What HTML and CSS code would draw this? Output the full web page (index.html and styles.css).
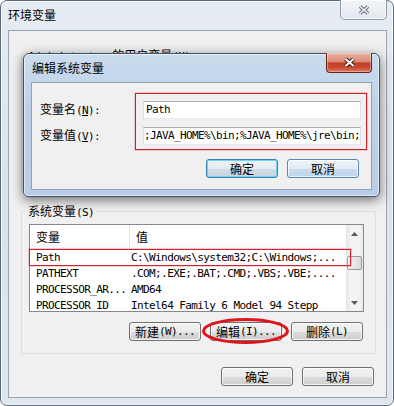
FILE: index.html
```html
<!DOCTYPE html>
<html>
<head>
<meta charset="utf-8">
<title>环境变量</title>
<link rel="stylesheet" href="styles.css">
</head>
<body>
<div class="win">
  <div class="titlebar">
    <div class="title">环境变量</div>
    <div class="xbtn">
      <svg width="12" height="10" viewBox="0 0 12 10"><path d="M2 1.5 L10 8.5 M10 1.5 L2 8.5" stroke="#66707c" stroke-width="3.6" fill="none"/><path d="M2 1.5 L10 8.5 M10 1.5 L2 8.5" stroke="#eef1f4" stroke-width="1.6" fill="none"/></svg>
    </div>
  </div>
  <div class="client">
    <div class="group user">
      <div class="glabel"><span class="m">Administrator </span>的用户变量<span class="m">(U)</span></div>
    </div>
    <div class="group sys">
      <div class="glabel">系统变量<span class="m">(S)</span></div>
      <div class="list">
        <div class="lmain">
          <div class="lhead"><div class="hc1">变量</div><div class="hc2">值</div></div>
          <div class="row"><div class="c1 m">Path</div><div class="c2 m">C:\Windows\system32;C:\Windows;...</div></div>
          <div class="row"><div class="c1 m">PATHEXT</div><div class="c2 m">.COM;.EXE;.BAT;.CMD;.VBS;.VBE;....</div></div>
          <div class="row"><div class="c1 m">PROCESSOR_AR...</div><div class="c2 m">AMD64</div></div>
          <div class="row"><div class="c1 m">PROCESSOR_ID</div><div class="c2 m">Intel64 Family 6 Model 94 Stepp</div></div>
        </div>
        <div class="sb">
          <div class="sbbtn"><svg width="7" height="4" viewBox="0 0 7 4"><path d="M0 4 L3.5 0 L7 4 Z" fill="#5a5a5a"/></svg></div>
          <div class="sbtrack"><div class="thumb"></div></div>
          <div class="sbbtn"><svg width="7" height="4" viewBox="0 0 7 4"><path d="M0 0 L3.5 4 L7 0 Z" fill="#5a5a5a"/></svg></div>
        </div>
      </div>
      <div class="brow">
        <div class="btn">新建<span class="m">(W)...</span></div>
        <div class="btn">编辑<span class="m">(I)...</span></div>
        <div class="btn">删除<span class="m">(L)</span></div>
      </div>
    </div>
    <div class="frow">
      <div class="btn">确定</div>
      <div class="btn">取消</div>
    </div>
  </div>
</div>

<div class="dlg">
  <div class="dtitle">
    <div class="title dt">编辑系统变量</div>
    <div class="dx">
      <svg width="13" height="11" viewBox="0 0 13 11"><path d="M2.5 2 L10.5 9 M10.5 2 L2.5 9" stroke="#4a1a12" stroke-width="4" fill="none"/><path d="M2.5 2 L10.5 9 M10.5 2 L2.5 9" stroke="#ffffff" stroke-width="2" fill="none"/></svg>
    </div>
  </div>
  <div class="dbody">
    <div class="fields">
      <div class="lbl">变量名<span class="m">(<u>N</u>):</span></div>
      <div class="inp m">Path</div>
      <div class="lbl">变量值<span class="m">(<u>V</u>):</span></div>
      <div class="inp long m">;JAVA_HOME%\bin;%JAVA_HOME%\jre\bin;</div>
    </div>
    <div class="dbtns">
      <div class="btn def">确定</div>
      <div class="btn hov">取消</div>
    </div>
  </div>
</div>

<div class="mark mark1"></div>
<div class="mark mark2"></div>
<svg class="ring" width="92" height="30" viewBox="0 0 92 30"><ellipse cx="45.5" cy="15" rx="42" ry="11.5" fill="none" stroke="#e0141e" stroke-width="3"/></svg>
</body>
</html>
```

FILE: styles.css
```css
* { box-sizing: border-box; }
html, body { margin: 0; padding: 0; }
body {
  width: 394px;
  height: 406px;
  overflow: hidden;
  position: relative;
  background: #ffffff;
  font-family: "Noto Sans CJK SC", sans-serif;
  font-size: 12px;
  line-height: 14px;
  color: #000;
}
.m {
  font-family: "DejaVu Sans Mono", monospace;
  font-size: 11px;
  letter-spacing: -0.6px;
}

/* outer window */
.win {
  width: 394px;
  height: 406px;
  border: 1px solid #5d6b7b;
  border-radius: 7px;
  padding: 0 6px 7px 7px;
  background: linear-gradient(180deg, #e6ecf2 0%, #dbe3eb 45%, #dfe6ed 100%);
  box-shadow: inset 0 0 0 1px rgba(255,255,255,0.65);
  display: flex;
  flex-direction: column;
}
.titlebar {
  height: 29px;
  display: flex;
  justify-content: space-between;
  align-items: flex-start;
}
.title { padding-top: 7px; white-space: nowrap; }
.xbtn {
  width: 47px;
  height: 20px;
  margin-top: -1px;
  border: 1px solid #8d9aa9;
  border-top: none;
  border-radius: 0 0 5px 5px;
  background: linear-gradient(180deg, #f3f5f8, #e3e8ee);
  box-shadow: inset 0 0 0 1px rgba(255,255,255,0.7);
  display: flex;
  align-items: center;
  justify-content: center;
}
.client {
  flex: 1;
  border: 1px solid #98a4b2;
  background: #f0f0f0;
  display: flex;
  flex-direction: column;
}

/* group boxes */
.group {
  border: 1px solid #d5dfe5;
  border-radius: 3px;
  padding: 0 11px 12px 7px;
}
.group.user { margin: 24px 10px 0 12px; height: 138px; }
.group.sys { margin: 18px 10px 0 12px; }
.glabel {
  display: block;
  width: max-content;
  height: 14px;
  margin: -8px 0 0 -3px;
  padding: 0 2px;
  background: #f0f0f0;
  white-space: nowrap;
}

/* list view */
.list {
  margin-top: 6px;
  height: 88px;
  border: 1px solid #828790;
  background: #fff;
  display: flex;
}
.lmain { flex: 1; overflow: hidden; }
.lhead {
  height: 25px;
  display: flex;
  border-bottom: 1px solid #e3e6ea;
  background: linear-gradient(180deg, #ffffff 0%, #ffffff 55%, #f6f7f9 100%);
}
.hc1 {
  width: 100px;
  padding-left: 6px;
  border-right: 1px solid #e3e6ea;
  display: flex;
  align-items: center;
}
.hc2 { padding-left: 6px; display: flex; align-items: center; }
.row {
  height: 16px;
  display: flex;
  align-items: center;
  white-space: nowrap;
}
.c1 { width: 100px; flex: none; padding-left: 6px; }
.c2 { padding-left: 1px; }
.sb {
  width: 17px;
  flex: none;
  background: linear-gradient(90deg, #e4e4e4 0%, #f3f3f3 25%, #f3f3f3 75%, #e8e8e8 100%);
  display: flex;
  flex-direction: column;
}
.sbbtn {
  height: 17px;
  display: flex;
  align-items: center;
  justify-content: center;
}
.sbtrack { flex: 1; }
.thumb {
  margin: 14px 1px 0 1px;
  height: 14px;
  border: 1px solid #9a9a9a;
  border-radius: 2px;
  background: linear-gradient(90deg, #f6f6f6, #e4e4e4 60%, #d9d9d9);
}

/* buttons */
.brow {
  display: flex;
  justify-content: flex-end;
  gap: 9px;
  margin: 10px 1px 0 0;
}
.frow {
  display: flex;
  justify-content: flex-end;
  gap: 9px;
  margin: 13px 12px 0 0;
}
.btn {
  width: 72px;
  height: 19px;
  border: 1px solid #707070;
  border-radius: 3px;
  background: linear-gradient(180deg, #f2f2f2 0%, #ebebeb 50%, #dddddd 51%, #cfcfcf 100%);
  box-shadow: inset 0 0 0 1px rgba(255,255,255,0.75);
  display: flex;
  align-items: center;
  justify-content: center;
  white-space: nowrap;
}
.btn.def {
  border-color: #3c7fb1;
  background: linear-gradient(180deg, #eef3f7 0%, #e4ebf1 50%, #d2dce6 51%, #c8d4df 100%);
  box-shadow: inset 0 0 0 1px #6fd3f7;
}
.btn.hov {
  border-color: #5b87ad;
  background: linear-gradient(180deg, #edf4fa 0%, #e0ecf7 50%, #cadcee 51%, #bed4ea 100%);
}

/* edit dialog */
.dlg {
  position: absolute;
  left: 23px;
  top: 53px;
  width: 357px;
  height: 144px;
  border: 1px solid #3d546d;
  border-radius: 6px 6px 5px 5px;
  padding: 0 7px 6px 7px;
  background: linear-gradient(180deg, #cbdcee 0%, #bdd2e9 35%, #b8cee6 100%);
  box-shadow: inset 0 0 0 1px rgba(255,255,255,0.55), 0 3px 12px rgba(0,0,0,0.55);
  display: flex;
  flex-direction: column;
}
.dtitle {
  height: 28px;
  display: flex;
  justify-content: space-between;
  align-items: flex-start;
}
.title.dt { padding-left: 1px; }
.dx {
  width: 46px;
  height: 20px;
  margin-top: -1px;
  border: 1px solid #6a2219;
  border-top: none;
  border-radius: 0 0 4px 4px;
  background: linear-gradient(180deg, #eab0a2 0%, #dc8b78 45%, #c4432b 52%, #c8482f 75%, #dc7a60 100%);
  box-shadow: inset 0 0 0 1px rgba(255,255,255,0.35);
  display: flex;
  align-items: center;
  justify-content: center;
}
.dbody {
  flex: 1;
  border: 1px solid #8da1b7;
  background: #f0f0f0;
  padding: 18px 10px 0 8px;
}
.fields {
  display: grid;
  grid-template-columns: 103px 218px;
  row-gap: 8px;
  align-items: center;
}
.lbl { white-space: nowrap; }
.inp {
  height: 18px;
  border: 1px solid #abadb3;
  border-left-color: #dbdfe6;
  border-right-color: #dbdfe6;
  border-bottom-color: #e3e9ef;
  background: #fff;
  padding-left: 2px;
  display: flex;
  align-items: center;
  white-space: nowrap;
  overflow: hidden;
}
.inp.long { padding-left: 0; letter-spacing: -0.62px; }
.dbtns {
  display: flex;
  justify-content: flex-end;
  gap: 9px;
  margin: 14px 2px 0 0;
}

/* red annotations */
.mark {
  position: absolute;
  border: 1px solid #d2202c;
  box-shadow: 0 0 0 0.5px rgba(210,32,44,0.4);
}
.mark1 { left: 135px; top: 93px; width: 232px; height: 57px; }
.mark2 { left: 29px; top: 249px; width: 322px; height: 17px; }
.ring { position: absolute; left: 200px; top: 316px; }
```
